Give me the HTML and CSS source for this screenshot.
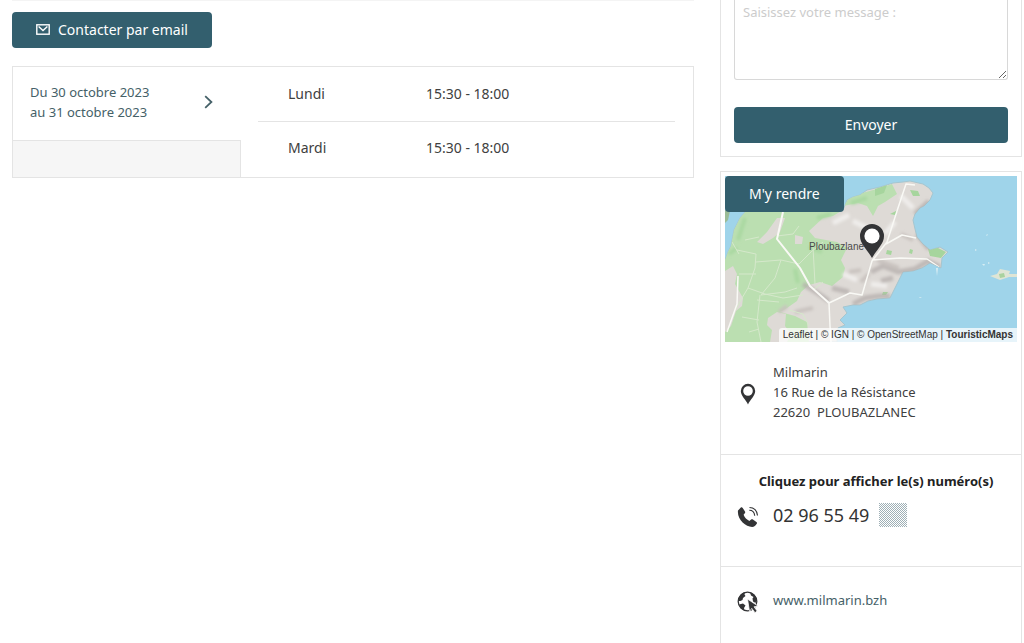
FILE: index.html
```html
<!DOCTYPE html>
<html lang="fr">
<head>
    <meta charset="UTF-8">
    <meta name="viewport" content="width=device-width, initial-scale=1">
    <title>Milmarin</title>
    <link rel="stylesheet" href="styles.css">
</head>
<body>
<div class="page">
    <main class="content">
        <button type="button" class="btn btn-mail">
            <svg width="14" height="11" viewBox="0 0 14 11" fill="none" stroke="currentColor" stroke-width="1.4">
                <rect x=".8" y=".8" width="12.4" height="9.4"/>
                <path d="M2.6 2.4 7 6.6l4.4-4.2"/>
            </svg>
            Contacter par email
        </button>

        <section class="opening">
            <div class="periods">
                <a href="#horaires" class="period">
                    <span>Du 30 octobre 2023<br>au 31 octobre 2023</span>
                    <svg width="9" height="14" viewBox="0 0 9 14" fill="none" stroke="currentColor" stroke-width="1.8">
                        <path d="M1.2 1.2 7.4 7l-6.2 5.8"/>
                    </svg>
                </a>
                <div class="periods-rest"></div>
            </div>
            <table class="hours" id="horaires">
                <tr><th scope="row">Lundi</th><td>15:30 - 18:00</td></tr>
                <tr><th scope="row">Mardi</th><td>15:30 - 18:00</td></tr>
            </table>
        </section>
    </main>

    <aside class="sidebar">
        <form class="card contact-form">
            <textarea class="message" aria-label="Message" placeholder="Saisissez votre message :"></textarea>
            <button type="button" class="btn btn-send">Envoyer</button>
        </form>

        <div class="card infos">
            <div class="map">
                <svg class="map-tiles" viewBox="0 0 292 166" preserveAspectRatio="xMidYMid slice">
                    <defs>
                        <filter id="soft" x="-20%" y="-20%" width="140%" height="140%"><feGaussianBlur stdDeviation="1.6"/></filter>
                        <clipPath id="coast">
                            <path id="coastline" d="M0 84 3 76 6 70 9 54 15 42 22 34H118L122 24 128 21 135 19 142 14 155 11 168 7 178 6 185 5 198 8 204 12 208 17 205 24 199 30 195 32 190 38 188 44 190 53 192 61 198 68 205 74 215 71 223 76 217 82 216 92 210 89 205 87 197 92 188 95 178 96 171 110 165 122 152 123 143 125 135 129 128 129 118 131 122 137 115 144 120 149 113 152 112 166H0z"/>
                        </clipPath>
                    </defs>
                    <rect width="292" height="166" fill="#9fd4ea"/>
                    <use href="#coastline" fill="#dedad6" stroke="#a5c6d0" stroke-width="1"/>
                    <g clip-path="url(#coast)">
                        <path fill="#bbdfb1" d="M0 34H118L108 40 98 42 84 55 90 62 112 66 122 72 116 84 120 92 118 101 107 110 95 106 84 109 76 116 72 125 62 132 55 136 70 140 82 146 84 166H0z"/>
                        <path fill="#bbdfb1" d="M118 30 126 20 152 13 167 8 172 18 160 26 153 30 148 40 142 30 133 27z"/>
                        <path fill="#a6d59d" d="M150 13l12-4-3 8-9 3zM185 14l8 1 2 5-7 0zM165 38l8-4-3 5zM162 74l5 1-1 4-5-1zM185 73l3 1-1 4-3-1zM203 73l10-1 8 4-5 6-11-2zM158 116l5 0-2 3-4 0z"/>
                        <path fill="#dedad6" d="M0 95 8 90 12 98 10 108 18 122 17 130 11 135 6 150 0 156zM32 66 42 56 52 42 60 42 55 56 48 62 38 68zM43 142 52 136 61 138 60 150 66 158 62 166H45l2-12-5-5zM70 59l8 2-1 7-7 0z"/>
                        <g filter="url(#soft)" fill="none">
                            <path stroke="#b4aeab" stroke-width="5" opacity=".75" d="M78 108 94 118 104 125M107 112 124 116M128 128 140 122 154 120 165 120M146 96 158 90 173 96 190 93 203 85 215 91M192 58 204 73M190 38 204 25M156 105 168 102"/>
                            <path stroke="#c9c3bf" stroke-width="4" d="M136 106 144 98M152 84 174 92M176 58 188 64M70 136 88 132M54 136 62 130M124 96 136 94"/>
                            <path stroke="#efedeb" stroke-width="5" d="M128 45 142 52M118 98 132 104M160 58 170 46M108 47 124 39M176 20 188 32M146 108 162 110"/>
                            <path stroke="#a9d8a0" stroke-width="4" d="M20 42 13 64M4 78 12 72M92 42 106 38M84 71 97 76M70 93 73 107M126 27 142 22"/>
                        </g>
                        <!-- petites routes -->
                        <path fill="none" stroke="#d5e8cb" stroke-width="1" d="M12 74 31 78 30 92 23 112 17 122 6 142M31 86 56 84 74 88 86 76 98 66M31 98 14 98M56 84 50 102 36 119 60 116 72 112M23 112 40 118 58 122 78 119M35 119 32 146 36 166M32 124 54 126M17 141 34 144M34 153 24 156M52 60 68 58 74 50M88 71 90 108M20 64 34 61M14 78 7 66M64 134 78 138 84 150M98 106 88 114"/>
                        <g fill="none" stroke="#f9f9f5" stroke-linejoin="round">
                            <path stroke-width="2" d="M58 36 52 63 75 92 85 110 104 127"/>
                            <path stroke-width="1.5" d="M104 127 105 150 106 166M104 127 125 117 137 119 147 85 162 66 173 32 181 8 190 9M147 84 175 82 202 83 214 91M161 68 177 59 191 62M13 100 12 128 2 156"/>
                        </g>
                    </g>
                    <path fill="#9bbc96" d="M0 34l5 1-2 9-3 3z"/>
                    <path fill="#dfe5d5" d="M265 100 272 98 275 93 285 95 284 98 292 98V101L284 101 275 104 270 102z"/>
                    <path fill="#a9d29f" d="M274 98l5-1 1 4-5 1z"/>
                    <path fill="#d8edf3" d="M250 73l2 1-2 1zM257 88l3 0-1 2zM261 59l2-1-1 2zM263 86l2 1-2 1zM211 92h2l-1 8zM194 121l3 0-2 1z"/>
                    <text class="map-town" x="84" y="74">Ploubazlane</text>
                    <path fill="#333436" d="M147 82C142 73 135 68 135 60a12 12 0 0 1 24 0C159 68 152 73 147 82z"/>
                    <circle cx="147" cy="60" r="7.6" fill="#fff"/>
                </svg>
                <button type="button" class="btn btn-route">M'y rendre</button>
                <div class="map-credits">Leaflet | © IGN | © OpenStreetMap | <b>TouristicMaps</b></div>
            </div>

            <div class="info info-address">
                <svg class="icon" width="22" height="22" viewBox="0 0 22 22" fill="#333436">
                    <path fill-rule="evenodd" d="M11 21.5C9.2 17 3.8 13 3.8 8a7.2 7.2 0 0 1 14.4 0C18.2 13 12.8 17 11 21.5zM11 3.2a4.8 4.8 0 1 0 0 9.6 4.8 4.8 0 0 0 0-9.6z"/>
                </svg>
                <address class="address">Milmarin<br>16 Rue de la Résistance<br>22620&nbsp; PLOUBAZLANEC</address>
            </div>

            <div class="info info-phone">
                <strong class="phone-title">Cliquez pour afficher le(s) numéro(s)</strong>
                <svg class="icon" width="22" height="22" viewBox="0 0 22 22">
                    <path fill="#333436" d="M1 4.5 3.6 1.8C4.3 1.100 5.200 1.300 5.700 2L8 5.400c.4.700.3 1.300-.2 1.900L6.600 8.700c1 2.700 3.200 5 5.800 6.200l1.700-1.300c.6-.4 1.200-.5 1.800-.1l3.500 2.400c.7.500.8 1.200.3 1.900-1 1.500-2.500 3.200-4.600 3.200C8.500 21-.2 13 1 4.500z"/>
                    <path fill="none" stroke="#333436" stroke-width="1.1" d="M12.500 1.500c4.500 0 7.700 3.300 8 8M12.300 4.300c3.300 0 5.100 2.300 5.400 5.400"/>
                </svg>
                <button type="button" class="phone">02 96 55 49 <span class="phone-mask"></span></button>
            </div>

            <div class="info info-web">
                <svg class="icon" width="22" height="22" viewBox="0 0 22 22">
                    <circle cx="10.5" cy="10.5" r="9.3" fill="#fff" stroke="#333436" stroke-width="1.3"/>
                    <path fill="#333436" d="M2 6.500C4 2.500 6 1.500 8 1.500L7.500 3.500 8.500 5 6 7 5.500 9 3.500 10 1.200 10zM13 1.500c3.500 1 6 3.500 6.800 7L18.500 12 16 10.500 15.500 7.500 16.500 6 14 4.500zM2 13.500l4-1 2.500 2L7 17l.5 2.500C4.500 18.500 2.500 16 2 13.500z"/>
                    <path fill="#333436" stroke="#fff" stroke-width=".8" d="M10.500 8 21 15l-4 .8 3.200 4.200-2.200 1.700-3.200-4.300-2.300 3.200z"/>
                </svg>
                <a href="#site" class="website">www.milmarin.bzh</a>
            </div>
        </div>
    </aside>
</div>
</body>
</html>
```
FILE: styles.css
```css
* {
    box-sizing: border-box;
}
body {
    margin: 0;
    background: #fff;
    color: #404040;
    font-family: "Trebuchet MS", "Noto Sans", sans-serif;
    font-size: 13px;
    line-height: 20px;
}
a {
    color: #456168;
    text-decoration: none;
}
.page {
    display: grid;
    grid-template-columns: 1fr 302px;
    column-gap: 26px;
    min-height: 100vh;
    padding: 0 2px 0 12px;
}

/* buttons */
.btn {
    display: flex;
    align-items: center;
    justify-content: center;
    height: 36px;
    padding: 0 24px 2px;
    border: 0;
    border-radius: 4px;
    background: #335f6e;
    color: #fff;
    font-family: inherit;
    font-size: 14px;
    cursor: pointer;
}
.btn-mail {
    gap: 8px;
}
.btn-send {
    width: 100%;
}

/* opening hours */
.content {
    padding-top: 11px;
    border-top: 1px solid #f4f4f4;
}
.opening {
    display: flex;
    align-items: flex-start;
    height: 112px;
    margin-top: 18px;
    border: 1px solid #e4e4e4;
}
.periods {
    display: flex;
    flex-direction: column;
    align-self: stretch;
    width: 228px;
}
.period {
    display: flex;
    align-items: center;
    justify-content: space-between;
    height: 73px;
    padding: 0 28px 4px 17px;
}
.periods-rest {
    flex: 1;
    border: solid #e4e4e4;
    border-width: 1px 1px 0 0;
    background: #f6f6f6;
}
.hours {
    flex: 1;
    margin: 0 18px 0 17px;
    border-collapse: collapse;
    font-size: 14px;
}
.hours th,
.hours td {
    height: 54px;
    padding: 0 0 0 30px;
    font-weight: normal;
    text-align: left;
}
.hours th {
    width: 138px;
}
.hours tr + tr {
    border-top: 1px solid #e4e4e4;
}

/* sidebar */
.sidebar {
    display: flex;
    flex-direction: column;
    gap: 14px;
}
.card {
    border: 1px solid #e4e4e4;
}
.contact-form {
    padding: 0 13px 13px;
    border-top: 0;
}
.message {
    display: block;
    width: 100%;
    height: 80px;
    margin-bottom: 27px;
    padding: 2px 8px;
    border: 1px solid #d8d8d8;
    border-top: 0;
    border-radius: 0 0 3px 3px;
    font: inherit;
    resize: vertical;
}
.message::placeholder {
    color: #ccc;
}
.infos {
    flex: 1;
    border-bottom: 0;
}

/* map */
.map {
    position: relative;
    height: 166px;
    margin: 4px 4px 0;
}
.map-tiles {
    display: block;
    width: 100%;
    height: 100%;
}
.map-town {
    fill: #4a4a4a;
    font: 10px "Liberation Sans", Arial, sans-serif;
}
.btn-route {
    position: absolute;
    top: 0;
    left: 0;
}
.map-credits {
    position: absolute;
    right: 0;
    bottom: 0;
    padding: 0 4px;
    border-radius: 3px 0 0 0;
    background: rgba(255, 255, 255, .75);
    color: #333;
    font: 10px/14px "Liberation Sans", Arial, sans-serif;
    white-space: nowrap;
}

/* contact details */
.info {
    display: grid;
    grid-template-columns: 22px 1fr;
    column-gap: 14px;
    align-items: center;
    padding: 20px 16px 32px;
}
.info + .info {
    border-top: 1px solid #e4e4e4;
}
.icon {
    margin-top: 4px;
}
.address {
    font-style: normal;
}
.info-phone {
    padding: 16px 16px 27px;
}
.phone-title {
    grid-column: 1 / -1;
    padding-left: 10px;
    color: #222;
    text-align: center;
}
.phone {
    display: flex;
    align-items: center;
    gap: 10px;
    height: 48px;
    padding: 0;
    border: 0;
    background: none;
    color: #333;
    font-family: inherit;
    font-size: 18px;
    cursor: pointer;
}
.phone-mask {
    width: 28px;
    height: 24px;
    background: conic-gradient(#fff 25%, #9fb0b6 0 50%, #fff 0 75%, #9fb0b6 0) 0 0 / 2px 2px;
}
```
